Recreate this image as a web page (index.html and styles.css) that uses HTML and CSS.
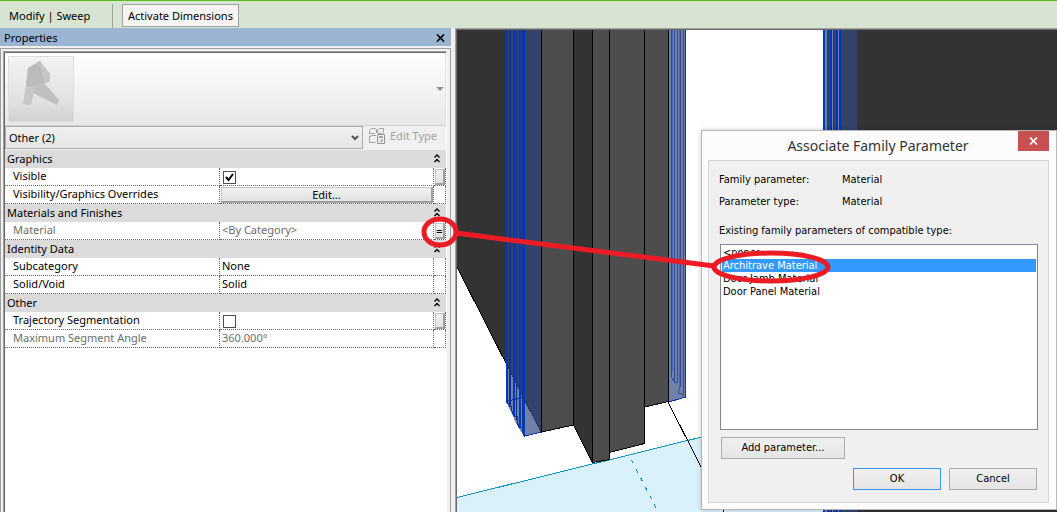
FILE: index.html
```html
<!DOCTYPE html>
<html lang="en">
<head>
<meta charset="utf-8">
<title>Properties</title>
<link rel="stylesheet" href="styles.css">
</head>
<body>
<header class="ribbon">
  <span class="ribbon-title">Modify | Sweep</span>
  <button class="ribbon-button" type="button">Activate Dimensions</button>
</header>
<main class="workspace">
  <aside class="properties">
    <div class="panel-title">
      <h2>Properties</h2>
      <button class="panel-close" type="button" aria-label="Close">
        <svg width="9" height="8" viewBox="0 0 9 8"><path d="M1 0.500L8 7.500M8 0.500L1 7.500" stroke="#000" stroke-width="1.700" fill="none"/></svg>
      </button>
    </div>
    <div class="panel-frame">
      <div class="panel-body">
        <button class="type-selector" type="button" aria-label="Type selector">
          <svg class="thumb" width="66" height="66" viewBox="0 0 66 66">
            <defs><linearGradient id="tg" x1="0" y1="0" x2="0" y2="1"><stop offset="0" stop-color="#f3f3f3"/><stop offset=".72" stop-color="#e0e0e0"/><stop offset="1" stop-color="#d0d0d0"/></linearGradient></defs>
            <rect x=".5" y=".5" width="65" height="65" fill="url(#tg)" stroke="#dedede"/>
            <path d="M20 12L32 5L42 18L42 25L36 28L51 44L49 49L25 37L23 49L15 48L18 30Z" fill="#c3c3c3"/>
            <path d="M20 12L32 5L37 27L18 31Z" fill="#bbb"/>
            <path d="M32 5L42 18L42 25L36 28Z" fill="#c6c6c6"/>
            <path d="M18 31L27 30L23 49L15 48Z" fill="#c8c8c8"/>
            <path d="M27 30L36 27L51 44L49 49L25 37Z" fill="#c0c0c0"/>
          </svg>
          <svg class="caret" width="8" height="4" viewBox="0 0 8 4"><path d="M0 0H8L4 4Z" fill="#929292"/></svg>
        </button>
        <div class="filter-row">
          <div class="select-wrap">
            <select class="filter" aria-label="Selection filter"><option>Other (2)</option></select>
            <svg class="chevron" width="8" height="6" viewBox="0 0 8 6"><path d="M1 1L4 4L7 1" fill="none" stroke="#505050" stroke-width="2"/></svg>
          </div>
          <button class="edit-type" type="button" disabled>
            <svg width="17" height="17" viewBox="0 0 17 17" fill="none" stroke="#a4a4a4">
              <path d="M.5 6V2.500L2.500.5H6.500L7.500 1.500V5M8.500 5V2.500L10.500.5H14.500V5.500M0 5.500H6M.5 8V14.500H6.500M.5 9.500L2.500 7.500H7M9 5.500H13"/>
              <path d="M8.500 6.500H15.500V15.500H8.500Z" stroke="#969696"/><path d="M10 9H14" stroke-width="2"/><path d="M10 11.500H11M13 11.500H14M11 13.500H13M12 12.500H14"/>
            </svg>
            Edit Type
          </button>
        </div>
        <table class="grid">
          <colgroup><col class="col-name"><col class="col-value"><col class="col-link"></colgroup>
          <tbody>
            <tr class="group"><th colspan="2">Graphics</th><td><svg class="fold" width="6" height="9" viewBox="0 0 6 9"><path d="M.5 3.500L3 1L5.500 3.500M.5 8L3 5.500L5.500 8"/></svg></td></tr>
            <tr><th><label for="visible">Visible</label></th><td><input id="visible" type="checkbox" checked></td><td><button class="link" type="button" aria-label="Associate Visible"></button></td></tr>
            <tr><th>Visibility/Graphics Overrides</th><td class="fill"><button class="edit" type="button">Edit...</button></td><td></td></tr>
            <tr class="group"><th colspan="2">Materials and Finishes</th><td><svg class="fold" width="6" height="9" viewBox="0 0 6 9"><path d="M.5 3.500L3 1L5.500 3.500M.5 8L3 5.500L5.500 8"/></svg></td></tr>
            <tr class="muted"><th>Material</th><td>&lt;By Category&gt;</td><td><button class="link" type="button" aria-label="Associate Material">=</button></td></tr>
            <tr class="group"><th colspan="2">Identity Data</th><td><svg class="fold" width="6" height="9" viewBox="0 0 6 9"><path d="M.5 3.500L3 1L5.500 3.500M.5 8L3 5.500L5.500 8"/></svg></td></tr>
            <tr><th>Subcategory</th><td>None</td><td></td></tr>
            <tr><th>Solid/Void</th><td>Solid</td><td></td></tr>
            <tr class="group"><th colspan="2">Other</th><td><svg class="fold" width="6" height="9" viewBox="0 0 6 9"><path d="M.5 3.500L3 1L5.500 3.500M.5 8L3 5.500L5.500 8"/></svg></td></tr>
            <tr><th><label for="segment">Trajectory Segmentation</label></th><td><input id="segment" type="checkbox"></td><td><button class="link" type="button" aria-label="Associate Trajectory Segmentation"></button></td></tr>
            <tr class="muted"><th>Maximum Segment Angle</th><td>360.000°</td><td></td></tr>
          </tbody>
        </table>
      </div>
    </div>
  </aside>
  <section class="view">
    <svg class="scene" width="100%" height="100%" aria-hidden="true">
      <g transform="translate(-457 -30)" shape-rendering="crispEdges">
        <path d="M457 497.500L823 407V700H457Z" fill="#d9f1fb"/>
        <path d="M457 497.500L823 407" stroke="#0a96c8" fill="none"/>
        <path d="M631.500 460L656 508" stroke="#0a96c8" stroke-dasharray="4 6" fill="none"/>
        <path d="M668 402L724 512" stroke="#000" fill="none"/>
        <path d="M457 30H541V432L457 267Z" fill="#333"/>
        <path d="M457 267L541 432" stroke="#000" fill="none"/>
        <path d="M506 30H541V432L524 436L518 427L511 412L506 401Z" fill="#334a83" fill-opacity=".7"/>
        <g fill="#0038b8">
          <path d="M506 30H508V403H506ZM513 30H515V416H513ZM519 30H521V427H519ZM523 30H525V436H523Z"/>
          <path d="M509 30H511V407H509ZM516 30H517V420H516ZM522 30H523V433H522Z" fill="#133580"/>
        </g>
        <path d="M506.500 401L509 405L511 406L512 411L514 416H517V422L519 427L522 428L524.500 436L541 432M508 401L523 397" fill="none" stroke="#0038b8"/>
        <path d="M541 30H573V425L541 432Z" fill="#4d4d4d"/>
        <path d="M573 30H592V462L573 425Z" fill="#333"/>
        <path d="M592 30H609V459L592 463Z" fill="#4d4d4d"/>
        <path d="M609 30H644V444L609 452Z" fill="#4d4d4d"/>
        <path d="M644 30H668V402L644 407Z" fill="#4d4d4d"/>
        <path d="M541.500 30V432L573.500 425V30M573.500 425L592.500 462.500V30M592.500 462.500L609.500 459.500V30M609.500 452.500L644.500 443.500V30M644.500 407L668.500 401.500V30" fill="none" stroke="#000"/>
        <path d="M669 30H685V397L669 402Z" fill="#7080a8"/>
        <path d="M671.500 30V371L672 378L674.500 382V30M677.500 30V382H674M680.500 30V385L678 393L683.500 395V30" fill="none" stroke="#2e4f9e"/>
        <path d="M672.500 30V371M679.500 30V388" fill="none" stroke="#4e68a5"/>
        <path d="M685.500 30V397L669 402" fill="none" stroke="#0038b8"/>
        <path d="M823 30H2400V2000H823Z" fill="#333"/>
        <path d="M823 30H857V2000H823Z" fill="#33446a"/>
        <path d="M825 30H827V2000H825ZM832 30H833V2000H832ZM838 30H839V2000H838Z" fill="#7080a8"/>
        <path d="M823 30H825V2000H823ZM827 30H828V2000H827ZM830 30H832V2000H830ZM833 30H834V2000H833ZM836 30H838V2000H836ZM839 30H841V2000H839ZM857 30H858V2000H857Z" fill="#0038b8"/>
      </g>
    </svg>
    <form class="dialog" role="dialog" aria-labelledby="dlg-title">
      <div class="dialog-title">
        <h1 id="dlg-title">Associate Family Parameter</h1>
        <button class="dialog-close" type="button" aria-label="Close">
          <svg width="9" height="8" viewBox="0 0 9 8"><path d="M1 .5L8 7.500M8 .5L1 7.500" stroke="#fff" stroke-width="1.700" fill="none"/></svg>
        </button>
      </div>
      <div class="dialog-body">
        <dl class="facts">
          <dt>Family parameter:</dt><dd>Material</dd>
          <dt>Parameter type:</dt><dd>Material</dd>
        </dl>
        <label class="list-label" for="params">Existing family parameters of compatible type:</label>
        <select id="params" class="param-list" size="14">
          <option>&lt;none&gt;</option>
          <option selected>Architrave Material</option>
          <option>Door Jamb Material</option>
          <option>Door Panel Material</option>
        </select>
        <button class="btn btn-add" type="button">Add parameter...</button>
        <div class="actions">
          <button class="btn btn-default" type="button">OK</button>
          <button class="btn" type="button">Cancel</button>
        </div>
      </div>
    </form>
  </section>
</main>
<svg class="markup" width="100%" height="100%" aria-hidden="true">
  <g fill="none" stroke="#ed1c24" stroke-width="5">
    <ellipse cx="440" cy="232" rx="16" ry="13"/>
    <path d="M456 233L714 266"/>
    <ellipse cx="771" cy="267" rx="57" ry="14"/>
  </g>
</svg>
</body>
</html>
```
FILE: styles.css
```css
* { box-sizing: border-box; }

body {
  margin: 0;
  min-height: 100vh;
  display: flex;
  flex-direction: column;
  position: relative;
  overflow: hidden;
  background: #f0f0f0;
  color: #000;
  font: 11px/16px "Noto Sans", "Open Sans", sans-serif;
}

button, select, input { font: inherit; color: inherit; margin: 0; }
h1, h2, dl, dd { margin: 0; font-weight: 400; }
svg { display: block; }

.ribbon {
  display: flex;
  height: 28px;
  padding: 3px 0 0 9px;
  background: #d8e4d2;
  border-top: 1px solid #5bbf21;
}
.ribbon-title {
  width: 104px;
  padding-top: 4px;
  margin-right: 9px;
  border-right: 1px solid #a0a0a0;
}
.ribbon-button {
  height: 23px;
  padding: 0 5px;
  background: #f4f4f4;
  border: 1px solid #a0a0a0;
}

.workspace { flex: 1; display: flex; }

.properties {
  flex: none;
  width: 455px;
  padding-right: 4px;
  display: flex;
  flex-direction: column;
}
.panel-title {
  display: flex;
  align-items: center;
  justify-content: space-between;
  height: 18px;
  padding: 1px 6px 0 4px;
  background: #9ab4d1;
}
.panel-title h2 { font-size: 11px; }
.panel-close { padding: 0; border: 0; background: none; }
.panel-frame {
  flex: 1;
  margin-top: 2px;
  padding: 2px 3px 0 2px;
  border: 1px solid #a0a0a0;
  border-bottom: 0;
}
.panel-body {
  height: 100%;
  border: 1px solid #a0a0a0;
  border-right-color: #fff;
  border-bottom: 0;
  background: #fff;
  box-shadow: inset 1px 1px #696969;
  padding: 1px 0 0 1px;
}
.type-selector {
  display: flex;
  align-items: center;
  justify-content: space-between;
  width: 100%;
  height: 73px;
  padding: 0 1px 0 3px;
  border: 0;
  border-right: 1px solid #e3e3e3;
  border-bottom: 1px solid #d0d0d0;
  background: linear-gradient(#fff, #e7e7e7);
}
.filter-row { display: flex; height: 24px; background: #f0f0f0; }
.select-wrap { position: relative; width: 358px; }
.filter {
  appearance: none;
  width: 100%;
  height: 23px;
  padding: 0 3px;
  border: 1px solid #acacac;
  border-radius: 0;
  background: linear-gradient(#f0f0f0, #e5e5e5);
}
.chevron { position: absolute; right: 4px; top: 9px; pointer-events: none; }
.edit-type {
  display: flex;
  align-items: center;
  gap: 4px;
  height: 20px;
  padding: 0 0 0 6px;
  border: 0;
  background: none;
  color: #a0a0a0;
}

.grid {
  width: 100%;
  table-layout: fixed;
  border-collapse: separate;
  border-spacing: 0;
}
.col-name { width: 215px; }
.col-link { width: 12px; }
.grid tr { height: 18px; }
.grid th, .grid td {
  height: 18px;
  padding: 0 0 2px 2px;
  line-height: 15px;
  text-align: left;
  font-weight: 400;
  border-right: 1px dotted #696969;
  border-bottom: 1px dotted #696969;
}
.grid th { padding-left: 8px; }
.grid td:last-child { padding: 0; }
.grid .group th, .grid .group td { background: #dbdbdb; border: 0; }
.grid .group th { padding: 0 0 0 2px; line-height: 18px; }
.grid .muted { color: #6d6d6d; }
.grid .fill { padding: 0 0 0 1px; }
.fold { margin: 0 0 2px; fill: none; stroke: #000; stroke-width: 1.3; }
.grid input {
  appearance: none;
  display: block;
  width: 13px;
  height: 13px;
  margin: 3px 0 -1px 1px;
  border: 1px solid #505050;
  background: #fff;
}
.grid input:checked {
  background: url('data:image/svg+xml,<svg xmlns="http://www.w3.org/2000/svg" width="11" height="11"><path d="M2 5L4.500 8L9 2" fill="none" stroke="black" stroke-width="2"/></svg>');
}
.edit, .link {
  display: block;
  padding: 0;
  border: 1px solid #c4c4c4;
  border-right: 2px solid #a0a0a0;
  border-bottom: 2px solid #a0a0a0;
  background: linear-gradient(#f0f0f0, #e2e2e2);
}
.edit { width: 100%; height: 16px; line-height: 13px; }
.link { width: 10px; height: 16px; margin-left: 1px; line-height: 13px; color: #000; }

.view {
  flex: 1;
  min-width: 0;
  position: relative;
  overflow: hidden;
  background: #fff;
  border-top: 1px solid #a0a0a0;
  border-left: 1px solid #a0a0a0;
  box-shadow: inset 1px 1px #696969;
  padding: 1px 0 0 1px;
}
.scene { position: absolute; inset: 1px 0 0 1px; }

.dialog {
  position: absolute;
  left: 245px;
  top: 101px;
  width: 356px;
  padding: 0 7px 6px 6px;
  border: 1px solid #b8b8b8;
  background: #fcfcfc;
  box-shadow: 0 0 5px rgba(0, 0, 0, .2);
  font: 11px/14px "DejaVu Sans Condensed", "DejaVu Sans", sans-serif;
}
.dialog-title { display: flex; height: 29px; }
.dialog-title h1 {
  flex: 1;
  padding-left: 30px;
  color: #333;
  text-align: center;
  font: 14px/29px "Noto Sans", "Open Sans", sans-serif;
}
.dialog-close {
  display: flex;
  align-items: center;
  justify-content: center;
  width: 31px;
  height: 20px;
  border: 0;
  background: #c75050;
}
.dialog-body {
  padding: 12px 10px 12px 10px;
  border: 1px solid #d4d4d4;
  background: #f0f0f0;
}
.facts {
  display: grid;
  grid-template-columns: 123px 1fr;
  row-gap: 8px;
}
.list-label { display: block; margin: 15px 0 6px; }
.param-list {
  display: block;
  width: calc(100% - 1px);
  height: 186px;
  margin-left: 1px;
  padding: 1px;
  border: 1px solid #828790;
  border-radius: 0;
  background: #fff;
  overflow: hidden;
  outline: 0;
}
.param-list option { height: 13px; min-height: 13px; padding: 0 1px; line-height: 14px; }
.param-list option:checked {
  color: #fff;
  background: #3399ff linear-gradient(#39f, #39f);
}
.btn {
  height: 22px;
  width: 88px;
  padding: 0;
  border: 1px solid #acacac;
  background: linear-gradient(#f0f0f0, #e5e5e5);
}
.btn-add { display: block; width: 124px; margin: 7px 0 9px 2px; }
.btn-default { border-color: #39f; }
.actions { display: flex; justify-content: flex-end; gap: 8px; padding-right: 1px; }

.markup { position: absolute; inset: 0; pointer-events: none; }
```
